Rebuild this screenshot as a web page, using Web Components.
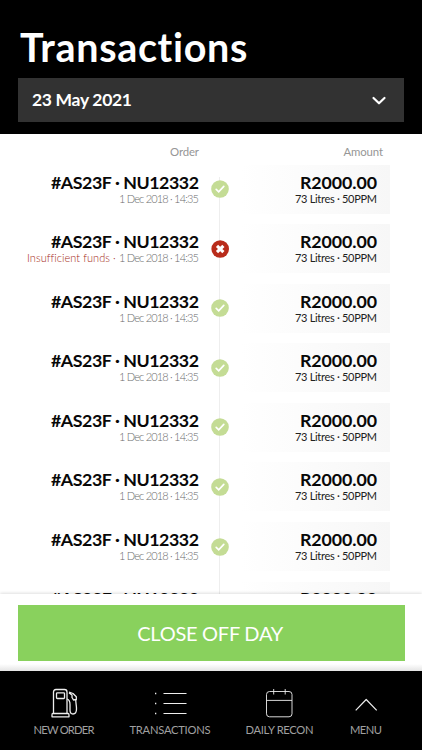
<!DOCTYPE html>
<html lang="en">
<head>
<meta charset="utf-8">
<title>Transactions</title>
<style>
html, body { margin: 0; height: 100%; background: #fff; font-family: Lato, "Liberation Sans", sans-serif; }
body { overflow: hidden; }
</style>
</head>
<body>
<transactions-app></transactions-app>
<script>
// A single line of text tracked so that it occupies a given width.
class FitText extends HTMLElement {
  connectedCallback() {
    if (this.shadowRoot) return;
    const w = Number(this.getAttribute('width'));
    this.attachShadow({ mode: 'open' }).innerHTML = `<style>:host{display:block;width:${w}px;white-space:nowrap}span{display:block;width:max-content}</style><span><slot></slot></span>`;
    const span = this.shadowRoot.querySelector('span');
    const natural = span.getBoundingClientRect().width;
    span.style.letterSpacing = ((w - natural) / (this.textContent.length - 1)) + 'px';
  }
}

class PageHeader extends HTMLElement {
  connectedCallback() {
    this.attachShadow({ mode: 'open' }).innerHTML = `
      <style>
        :host{display:block;box-sizing:border-box;height:134px;padding:24px 18px 0;background:#000;color:#fff}
        .title{font-size:39.5px;line-height:45px;font-weight:700;padding-left:2px;height:46px}
        .date{display:flex;align-items:center;justify-content:space-between;box-sizing:border-box;height:44px;margin-top:8px;padding:0 17px 0 14px;background:#323232;font-size:17.5px;line-height:22px;font-weight:700}
      </style>
      <div class="title"><fit-text width="228">Transactions</fit-text></div>
      <div class="date"><fit-text width="100">23 May 2021</fit-text>
        <svg width="16" height="12" viewBox="0 0 16 12" fill="none" stroke="#fff" stroke-width="2.2" stroke-linecap="round" stroke-linejoin="round"><path d="M2.5 4 8 9.3 13.5 4"/></svg>
      </div>`;
  }
}

class StatusMark extends HTMLElement {
  connectedCallback() {
    const bad = this.getAttribute('kind') === 'failed';
    this.attachShadow({ mode: 'open' }).innerHTML = `
      <style>:host{display:block;height:18px}svg{display:block}</style>
      <svg width="18" height="18" viewBox="0 0 18 18" fill="none" stroke="#fff">${bad
        ? '<circle cx="9.2" cy="9" r="8.8" fill="#b92c1b" stroke="none"/><path d="M6 5.800 12.400 12.200M12.400 5.800 6 12.200" stroke-width="3.100"/>'
        : '<circle cx="9" cy="9" r="8.8" fill="#c4dc95" stroke="none"/><path d="M5.2 9.4 7.7 11.8 12.8 6.3" stroke-width="1.7" stroke-linecap="round"/>'}</svg>`;
  }
}

class TransactionRow extends HTMLElement {
  connectedCallback() {
    const failed = this.hasAttribute('failed');
    this.attachShadow({ mode: 'open' }).innerHTML = `
      <style>
        :host{display:grid;grid-template-columns:199px 42px 149px;height:59.6px;align-items:start}
        .order,.card{display:flex;flex-direction:column;align-items:flex-end}
        .order{padding-top:8px}
        :host(:last-child) .order,:host(:last-child) .card{padding-top:7px}
        .id,.sum{font-size:17.8px;line-height:19px;font-weight:700;color:#080808}
        .meta{display:flex;gap:4px;font-size:11px;line-height:14px;font-weight:300;color:#6c6c6c}
        .why{color:#a52a18}
        status-mark{justify-self:center;margin-top:15.5px}
        .card{box-sizing:border-box;height:49px;padding:8px 13px 0 0;background:linear-gradient(90deg,#fff,#f7f7f7)}
        .card .meta{color:#222;font-weight:400}
      </style>
      <div class="order">
        <div class="id"><fit-text width="148">#AS23F · NU12332</fit-text></div>
        <div class="meta">${failed ? '<fit-text class="why" width="88">Insufficient funds ·</fit-text>' : ''}<fit-text width="80">1 Dec 2018 · 14:35</fit-text></div>
      </div>
      <status-mark kind="${failed ? 'failed' : 'done'}"></status-mark>
      <div class="card">
        <div class="sum"><fit-text width="77">R2000.00</fit-text></div>
        <div class="meta"><fit-text width="82">73 Litres · 50PPM</fit-text></div>
      </div>`;
  }
}

class TransactionList extends HTMLElement {
  connectedCallback() {
    this.attachShadow({ mode: 'open' }).innerHTML = `
      <style>
        :host{display:block;flex:1;min-height:0;overflow:hidden;background:#fff}
        .head{display:flex;justify-content:space-between;box-sizing:border-box;height:30.5px;padding:10px 39px 0 170px;font-size:11.4px;line-height:16px;color:#969696}
        .rows{background:linear-gradient(#eee,#eee) 219px 12px/1px 100% no-repeat}
      </style>
      <div class="head"><fit-text width="29">Order</fit-text><fit-text width="39.5">Amount</fit-text></div>
      <div class="rows">${Array.from({ length: 8 }, (_, i) => `<transaction-row${i === 1 ? ' failed' : ''}></transaction-row>`).join('')}</div>`;
  }
}

class CloseDay extends HTMLElement {
  connectedCallback() {
    this.attachShadow({ mode: 'open' }).innerHTML = `
      <style>
        :host{display:block;position:relative;box-sizing:border-box;height:77px;padding:11px 17.5px 0 18px;background:linear-gradient(#fff 70px,#e4e4e4);box-shadow:0 -1px 3px rgba(0,0,0,.13)}
        button{display:flex;align-items:center;justify-content:center;width:100%;height:56px;padding:0 2px 0 0;border:0;border-radius:0;background:#89d15d;color:#fff;font:400 20px/24px Lato,sans-serif}
      </style>
      <button><fit-text width="146">CLOSE OFF DAY</fit-text></button>`;
  }
}

const icons = {
  pump: '<g stroke-width="1.3" transform="translate(1.500 -.5)"><path d="M3 26V4.5Q3 2 5.5 2H14q2.500 0 2.500 2.500V26"/><path d="M2.200 26H17.500Q18.500 26 18.500 27.500V29.300H1.500V27.500Q1.500 26 2.200 26Z"/><rect x="6" y="5.300" width="8" height="5.700" rx=".8"/><path d="M16.500 11.500Q19.500 12.500 19.500 17V22.500Q19.500 26.500 22.500 26.500Q26 26.500 26 21.500C26 17 25 15 25.300 11.500"/><path d="M18.500 4.500 22.500 6 25.800 9.200V12L23 12.500 21.500 10V7.500L18.500 5.500"/></g>',
  list: '<path d="M11.500 5.500h23M11.500 15.500h23M11.500 25.500h23" stroke-width="1.2"/><path d="M3 5.500h1.300M3 15.500h1.300M3 25.500h1.300" stroke-width="1.3"/>',
  calendar: '<rect x="1.500" y="3.500" width="25.500" height="25.300" rx="3"/><path d="M1.500 12.400h25.500M8.700 1V6.500M20.200 1V6.500"/>',
  up: '<path d="M4.700 22.300 15.200 11.500 25.700 22.300" stroke-width="1.2"/>'
};

class NavItem extends HTMLElement {
  connectedCallback() {
    const icon = this.getAttribute('icon');
    const w = icon === 'list' ? 36 : 30;
    this.attachShadow({ mode: 'open' }).innerHTML = `
      <style>
        :host{display:flex;flex-direction:column;align-items:center;color:#a0a0a0;font-size:11.2px;line-height:16px}
        svg{display:block;height:30px;margin-bottom:4px;overflow:visible}
      </style>
      <svg width="${w}" height="30" viewBox="0 0 ${w} 30" fill="none" stroke="#eee" stroke-width=".9" stroke-linejoin="round">${icons[icon]}</svg>
      <slot></slot>`;
  }
}

class BottomNav extends HTMLElement {
  connectedCallback() {
    this.attachShadow({ mode: 'open' }).innerHTML = `
      <style>:host{display:grid;grid-template-columns:61px 81px 68px 32px;column-gap:35px;box-sizing:border-box;height:79px;padding:17px 39px 0 33.5px;background:#000;position:relative}nav-item:last-child{margin-left:3px}</style>
      <nav-item icon="pump"><fit-text width="61">NEW ORDER</fit-text></nav-item>
      <nav-item icon="list"><fit-text width="81">TRANSACTIONS</fit-text></nav-item>
      <nav-item icon="calendar"><fit-text width="68">DAILY RECON</fit-text></nav-item>
      <nav-item icon="up"><fit-text width="32">MENU</fit-text></nav-item>`;
  }
}

class TransactionsApp extends HTMLElement {
  connectedCallback() {
    this.attachShadow({ mode: 'open' }).innerHTML = `
      <style>:host{display:flex;flex-direction:column;height:750px}</style>
      <page-header></page-header><transaction-list></transaction-list><close-day></close-day><bottom-nav></bottom-nav>`;
  }
}

// Containers come first so that text is measured inside its final styles.
customElements.define('transactions-app', TransactionsApp);
customElements.define('page-header', PageHeader);
customElements.define('transaction-list', TransactionList);
customElements.define('transaction-row', TransactionRow);
customElements.define('status-mark', StatusMark);
customElements.define('close-day', CloseDay);
customElements.define('bottom-nav', BottomNav);
customElements.define('nav-item', NavItem);
customElements.define('fit-text', FitText);
</script>
</body>
</html>
